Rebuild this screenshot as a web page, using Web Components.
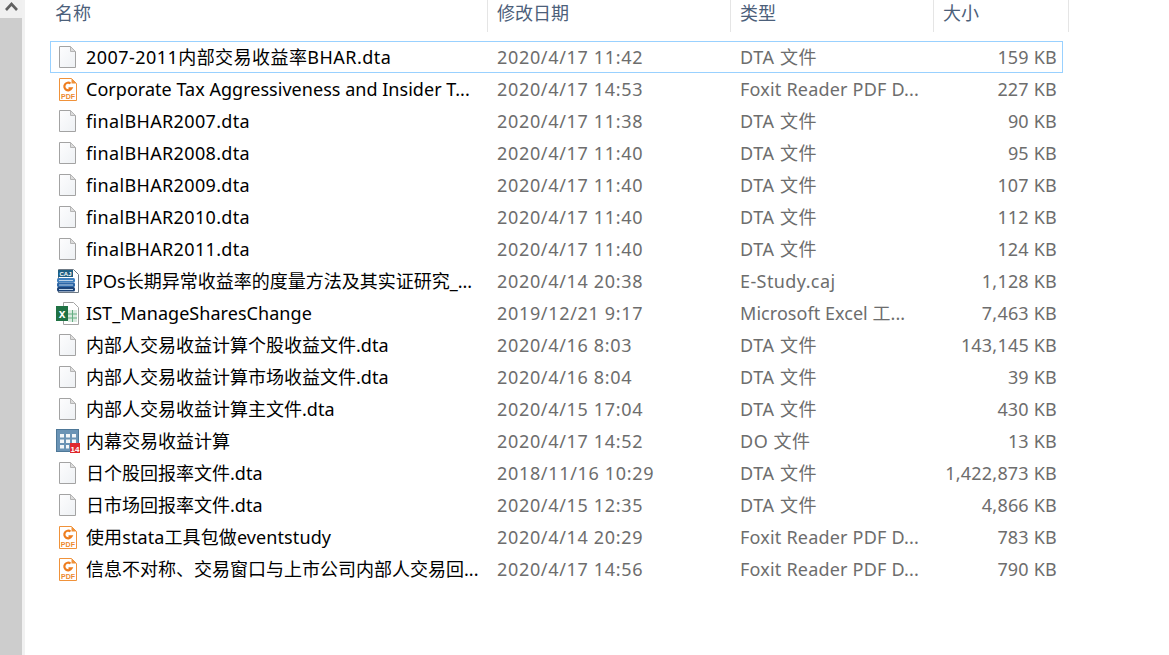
<!DOCTYPE html>
<html>
<head>
<meta charset="utf-8">
<style>
html, body { margin: 0; padding: 0; background: #fff; height: 100%; overflow: hidden; }
body { font-family: "Noto Sans", "Noto Sans CJK SC", sans-serif; font-size: 18px; }
</style>
</head>
<body>
<explorer-view></explorer-view>
<script>
const ICONS = {
  blank: `<svg width="17" height="22" viewBox="0 0 17 22"><defs><linearGradient id="g" x1="0" y1="0" x2="1" y2="1"><stop offset="0" stop-color="#fdfdfe"/><stop offset="1" stop-color="#eef1f4"/></linearGradient></defs><path d="M.5.5h11l5 5v16H.5z" fill="url(#g)" stroke="#a3a3a3"/><path d="M11.500.5v5h5z" fill="#dcdcdc" stroke="#b5b5b5"/></svg>`,
  pdf: `<svg width="18" height="23" viewBox="0 0 18 23"><path d="M.5.5h12l5 5v17H.5z" fill="#fff" stroke="#f0923a"/><path d="M12.500.5v5h5z" fill="#f0923a"/><path d="M11.500 5.500a3.800 3.800 0 1 0 1 4.800h-3" fill="none" stroke="#ee7d1e" stroke-width="2.200"/><text x="9" y="20.500" text-anchor="middle" font-family="Liberation Sans" font-size="7" font-weight="700" fill="#ee8a2e">PDF</text></svg>`,
  caj: `<svg width="22" height="24" viewBox="0 0 22 24"><path d="M1.500.5h15l5 5v18h-20z" fill="#fff" stroke="#6f7a85"/><path d="M1 1h15v7H1z" fill="#1f5f83"/><text x="8.500" y="7" text-anchor="middle" font-family="Liberation Sans" font-size="6" font-weight="700" fill="#fff">CAJ</text><rect x="0" y="9" width="18" height="4.500" rx="1.500" fill="#3e7fbe"/><rect x="0" y="13.500" width="18" height="4.500" rx="1.500" fill="#2c66a6"/><rect x="0" y="18" width="18" height="4.500" rx="1.500" fill="#1c4479"/><path d="M2 11.500h14M2 16h14M2 20.500h14" stroke="#bcd3e8"/></svg>`,
  excel: `<svg width="23" height="24" viewBox="0 0 23 24"><path d="M7.500 1.500h10l5 5v17h-15z" fill="#fff" stroke="#a3a3a3"/><path d="M12 9h9v12h-9z" fill="#d9eadf"/><path d="M12 13h9M12 17h9M16.500 9v12" stroke="#64ad82"/><rect x="0" y="5" width="12" height="15" fill="#1f7244"/><text x="6" y="16.500" text-anchor="middle" font-family="Liberation Sans" font-size="12" font-weight="700" fill="#fff">x</text></svg>`,
  stata: `<svg width="24" height="24" viewBox="0 0 24 24"><rect x=".5" y=".5" width="22" height="22" fill="#6a93b5" stroke="#4e7898"/><path d="M4 5h4v3.500H4zM10 5h4v3.500h-4zM16 5h4v3.500h-4zM4 10.500h4V14H4zM10 10.500h4V14h-4zM16 10.500h4V14h-4zM4 16h4v3.500H4zM10 16h3v3.500h-3z" fill="#f2f6f9"/><rect x="14" y="14" width="10" height="10" fill="#e0282d"/><text x="19" y="22.500" text-anchor="middle" font-family="Liberation Sans" font-size="8" font-weight="700" fill="#fff">14</text></svg>`
}
const ICON_LEFT = { blank: 8, pdf: 8, caj: 6, excel: 5, stata: 5 }

class ScrollBar extends HTMLElement {
  constructor() {
    super()
    this.attachShadow({ mode: 'open' }).innerHTML = `
    <style>
    :host { display: flex; flex-direction: column; width: 22px; background: #cdcdcd; border-right: 3px solid #f1f1f1; }
    .up { height: 18px; background: #f0f0f0; display: flex; justify-content: center; padding-top: 2px; box-sizing: border-box; }
    </style>
    <div class="up"><svg width="13" height="9" viewBox="0 0 13 9"><path d="M1 8l5.500-6 5.500 6" fill="none" stroke="#606060" stroke-width="2.600"/></svg></div>`
  }
}

class ColumnHead extends HTMLElement {
  constructor() {
    super()
    this.attachShadow({ mode: 'open' }).innerHTML = `
    <style>
    :host { display: flex; box-sizing: border-box; height: 32px; padding-left: 9px; line-height: 26px; color: #4c607a; border-right: 1px solid #e5e5e5; }
    </style>
    <slot></slot>`
  }
}

class FileRow extends HTMLElement {
  constructor() {
    super()
    const icon = this.getAttribute('icon') || 'blank'
    this.attachShadow({ mode: 'open' }).innerHTML = `
    <style>
    :host { display: grid; grid-template-columns: 437px 243px 203px 128px; box-sizing: border-box; height: 32px; line-height: 30px; border: 1px solid transparent; color: #6d6d6d; white-space: nowrap; }
    :host([selected]) { border-color: #99d1ff; }
    .name { display: flex; align-items: center; color: #000; letter-spacing: var(--name-ls, 0); }
    .icon { box-sizing: border-box; width: 35px; flex: none; display: flex; padding-left: ${ICON_LEFT[icon]}px; }
    .icon svg { display: block; }
    .date { padding-left: 9px; letter-spacing: .67px; }
    .type { padding-left: 9px; letter-spacing: var(--type-ls, 0); }
    .size { text-align: right; padding-right: 5px; letter-spacing: .2px; }
    </style>
    <div class="name"><div class="icon">${ICONS[icon]}</div><div><slot></slot></div></div>
    <div class="date">${this.getAttribute('date')}</div>
    <div class="type">${this.getAttribute('type')}</div>
    <div class="size">${this.getAttribute('size')}</div>`
  }
}

class FileList extends HTMLElement {
  constructor() {
    super()
    this.attachShadow({ mode: 'open' }).innerHTML = `
    <style>
    :host { display: flex; flex-direction: column; margin-left: 25px; width: 1013px; padding-top: 9px; }
    </style>
    <slot></slot>`
  }
}

class ExplorerView extends HTMLElement {
  constructor() {
    super()
    const DTA = 'DTA 文件', FOXIT = 'Foxit Reader PDF D...'
    const typeLs = { [DTA]: .6, 'DO 文件': .5, 'E-Study.caj': .4, [FOXIT]: .2, 'Microsoft Excel 工...': .05 }
    // name, date, type, size, icon, letter-spacing of the name
    const files = [
      ['2007-2011内部交易收益率BHAR.dta', '2020/4/17 11:42', DTA, '159 KB', 'blank', .45],
      ['Corporate Tax Aggressiveness and Insider T...', '2020/4/17 14:53', FOXIT, '227 KB', 'pdf', .03],
      ['finalBHAR2007.dta', '2020/4/17 11:38', DTA, '90 KB', 'blank', .35],
      ['finalBHAR2008.dta', '2020/4/17 11:40', DTA, '95 KB', 'blank', .35],
      ['finalBHAR2009.dta', '2020/4/17 11:40', DTA, '107 KB', 'blank', .35],
      ['finalBHAR2010.dta', '2020/4/17 11:40', DTA, '112 KB', 'blank', .35],
      ['finalBHAR2011.dta', '2020/4/17 11:40', DTA, '124 KB', 'blank', .35],
      ['IPOs长期异常收益率的度量方法及其实证研究_...', '2020/4/14 20:38', 'E-Study.caj', '1,128 KB', 'caj', 0],
      ['IST_ManageSharesChange', '2019/12/21 9:17', 'Microsoft Excel 工...', '7,463 KB', 'excel', .05],
      ['内部人交易收益计算个股收益文件.dta', '2020/4/16 8:03', DTA, '143,145 KB', 'blank', 0],
      ['内部人交易收益计算市场收益文件.dta', '2020/4/16 8:04', DTA, '39 KB', 'blank', 0],
      ['内部人交易收益计算主文件.dta', '2020/4/15 17:04', DTA, '430 KB', 'blank', 0],
      ['内幕交易收益计算', '2020/4/17 14:52', 'DO 文件', '13 KB', 'stata', 0],
      ['日个股回报率文件.dta', '2018/11/16 10:29', DTA, '1,422,873 KB', 'blank', 0],
      ['日市场回报率文件.dta', '2020/4/15 12:35', DTA, '4,866 KB', 'blank', 0],
      ['使用stata工具包做eventstudy', '2020/4/14 20:29', FOXIT, '783 KB', 'pdf', .1],
      ['信息不对称、交易窗口与上市公司内部人交易回...', '2020/4/17 14:56', FOXIT, '790 KB', 'pdf', 0]
    ]
    const rows = files.map((f, i) => `<file-row style="--name-ls:${f[5]}px;--type-ls:${typeLs[f[2]]}px" icon="${f[4]}" date="${f[1]}" type="${f[2]}" size="${f[3]}"${i == 0 ? ' selected' : ''}>${f[0]}</file-row>`).join('')
    this.attachShadow({ mode: 'open' }).innerHTML = `
    <style>
    :host { display: flex; height: 655px; }
    .main { flex: 1; }
    .heads { display: grid; grid-template-columns: 438px 243px 203px 135px; margin-left: 25px; width: 1019px; }
    </style>
    <scroll-bar></scroll-bar>
    <div class="main">
      <div class="heads">
        <column-head style="padding-left:5px">名称</column-head>
        <column-head>修改日期</column-head>
        <column-head>类型</column-head>
        <column-head>大小</column-head>
      </div>
      <file-list>${rows}</file-list>
    </div>`
  }
}

customElements.define('scroll-bar', ScrollBar)
customElements.define('column-head', ColumnHead)
customElements.define('file-row', FileRow)
customElements.define('file-list', FileList)
customElements.define('explorer-view', ExplorerView)
</script>
</body>
</html>
